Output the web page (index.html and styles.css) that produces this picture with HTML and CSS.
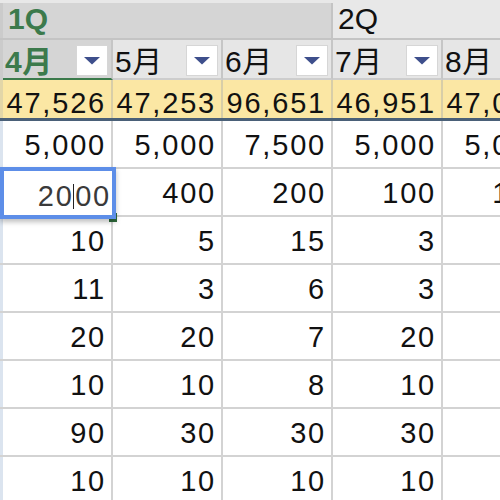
FILE: index.html
```
<!DOCTYPE html>
<html lang="ja">
<head>
<meta charset="utf-8">
<link rel="stylesheet" href="styles.css">
</head>
<body>
<div class="sheet">
  <div class="row grp">
    <div class="gut"></div>
    <div class="gcell g-sel">1Q</div>
    <div class="gcell">2Q</div>
  </div>
  <div class="row hdr">
    <div class="gut"></div>
    <div class="hcell h-sel"><span class="lbl">4月</span><span class="dd"><svg width="16" height="8" viewBox="0 0 16 8"><polygon points="0,0 16,0 8,7.5" fill="#3e4f8c"/></svg></span></div>
    <div class="hcell"><span class="lbl">5月</span><span class="dd"><svg width="16" height="8" viewBox="0 0 16 8"><polygon points="0,0 16,0 8,7.5" fill="#3e4f8c"/></svg></span></div>
    <div class="hcell"><span class="lbl">6月</span><span class="dd"><svg width="16" height="8" viewBox="0 0 16 8"><polygon points="0,0 16,0 8,7.5" fill="#3e4f8c"/></svg></span></div>
    <div class="hcell"><span class="lbl">7月</span><span class="dd"><svg width="16" height="8" viewBox="0 0 16 8"><polygon points="0,0 16,0 8,7.5" fill="#3e4f8c"/></svg></span></div>
    <div class="hcell"><span class="lbl">8月</span><span class="dd"><svg width="16" height="8" viewBox="0 0 16 8"><polygon points="0,0 16,0 8,7.5" fill="#3e4f8c"/></svg></span></div>
  </div>
  <div class="row sum">
    <div class="gut"></div>
    <div class="cell">47,526</div>
    <div class="cell">47,253</div>
    <div class="cell">96,651</div>
    <div class="cell">46,951</div>
    <div class="cell">47,051</div>
  </div>
  <div class="row data">
    <div class="gut"></div>
    <div class="cell">5,000</div><div class="cell">5,000</div><div class="cell">7,500</div><div class="cell">5,000</div><div class="cell">5,000</div>
  </div>
  <div class="row data">
    <div class="gut"></div>
    <div class="cell">2000</div><div class="cell">400</div><div class="cell">200</div><div class="cell">100</div><div class="cell">100</div>
  </div>
  <div class="row data">
    <div class="gut"></div>
    <div class="cell">10</div><div class="cell">5</div><div class="cell">15</div><div class="cell">3</div><div class="cell">5</div>
  </div>
  <div class="row data">
    <div class="gut"></div>
    <div class="cell">11</div><div class="cell">3</div><div class="cell">6</div><div class="cell">3</div><div class="cell">3</div>
  </div>
  <div class="row data">
    <div class="gut"></div>
    <div class="cell">20</div><div class="cell">20</div><div class="cell">7</div><div class="cell">20</div><div class="cell">20</div>
  </div>
  <div class="row data">
    <div class="gut"></div>
    <div class="cell">10</div><div class="cell">10</div><div class="cell">8</div><div class="cell">10</div><div class="cell">10</div>
  </div>
  <div class="row data">
    <div class="gut"></div>
    <div class="cell">90</div><div class="cell">30</div><div class="cell">30</div><div class="cell">30</div><div class="cell">30</div>
  </div>
  <div class="row data">
    <div class="gut"></div>
    <div class="cell">10</div><div class="cell">10</div><div class="cell">10</div><div class="cell">10</div><div class="cell">10</div>
  </div>
  <div class="handle"></div>
  <div class="editor">20<span class="caret"></span>00</div>
</div>
</body>
</html>
```
FILE: styles.css
```
html, body {
  margin: 0;
  padding: 0;
  background: #ffffff;
}
.sheet {
  position: relative;
  width: 500px;
  height: 500px;
  overflow: hidden;
  font-family: "Liberation Sans", "Noto Sans CJK JP", sans-serif;
  color: #111;
}
.row {
  display: flex;
  flex-wrap: nowrap;
}
.gut {
  flex: none;
  width: 3px;
  box-sizing: border-box;
}

/* group header row */
.grp {
  background: #e8e8e8;
  padding-top: 3px;
  border-bottom: 2px solid #c4c4c4;
}
.grp .gut { background: #cbcbcb; }
.gcell {
  flex: none;
  width: 330px;
  height: 35px;
  box-sizing: border-box;
  border-right: 2px solid #c4c4c4;
  padding-left: 5px;
  font-size: 30px;
  line-height: 32px;
  color: #111;
}
.g-sel {
  background: #d5d5d5;
  color: #3c7a4c;
  font-weight: bold;
}

/* month header row */
.hdr .gut { background: #cbcbcb; }
.hcell {
  flex: none;
  width: 110px;
  height: 40px;
  box-sizing: border-box;
  border-right: 2px solid #c6c6c6;
  border-bottom: 2px solid #cdcdcd;
  background: #e6e6e6;
  display: flex;
  justify-content: space-between;
  align-items: flex-start;
  padding-left: 2px;
  padding-right: 3px;
}
.h-sel {
  background: #d5d5d5;
  border-bottom-color: #3b7a4b;
  color: #3c7a4c;
  font-weight: bold;
}
.lbl {
  font-size: 30px;
  line-height: 44px;
  height: 38px;
  letter-spacing: 0.5px;
  white-space: nowrap;
}
.dd {
  margin-top: 5px;
  width: 32px;
  height: 31px;
  box-sizing: border-box;
  background: #ffffff;
  border: 1px solid #d6d6d6;
  display: flex;
  align-items: center;
  justify-content: center;
  padding-top: 1px;
}
.dd svg { display: block; }

/* cells */
.cell {
  flex: none;
  width: 110px;
  box-sizing: border-box;
  border-right: 2px solid #d3d3d3;
  text-align: right;
  padding-right: 5px;
  font-size: 29px;
  letter-spacing: 1.8px;
  white-space: nowrap;
  overflow: hidden;
}

/* total row */
.sum {
  background: #fbe7a4;
  border-bottom: 3px solid #4a6078;
}
.sum .gut { background: #e2d6a8; }
.sum .cell {
  height: 38px;
  line-height: 46px;
  border-right-color: #d8cea8;
}

/* data rows */
.data {
  border-bottom: 2px solid #d3d3d3;
}
.data .gut { background: #dbe4ef; }
.data .cell {
  height: 46px;
  line-height: 48px;
}

/* editing overlay */
.editor {
  position: absolute;
  left: 0;
  top: 167px;
  width: 116px;
  height: 52px;
  box-sizing: border-box;
  border: 4px solid #5d8ee8;
  background: #ffffff;
  box-shadow: 0 3px 5px rgba(0, 0, 0, 0.25);
  text-align: right;
  padding-right: 1px;
  font-size: 29px;
  line-height: 50px;
  letter-spacing: 1.8px;
  color: #3a3a3a;
  white-space: nowrap;
}
.caret {
  display: inline-block;
  width: 1.5px;
  height: 25px;
  background: #222;
  vertical-align: -3px;
  margin-right: 1px;
  margin-left: -1px;
}
.handle {
  position: absolute;
  left: 109px;
  top: 213px;
  width: 8px;
  height: 9px;
  background: #2f6b3c;
}
```
